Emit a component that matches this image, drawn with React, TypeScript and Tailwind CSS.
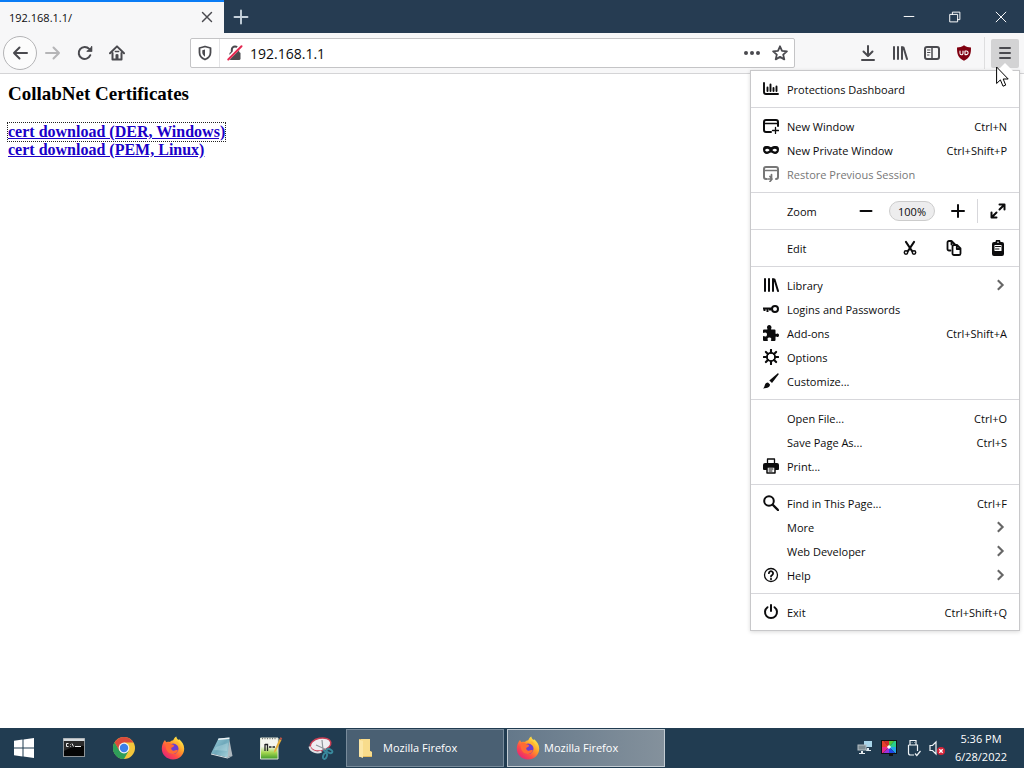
import React, { type ReactNode } from "react";

type IconProps = { children: ReactNode; className?: string; size?: number };

function Icon({ children, className = "", size = 16 }: IconProps) {
  return (
    <svg
      width={size}
      height={size}
      viewBox="0 0 16 16"
      fill="none"
      stroke="currentColor"
      strokeWidth="2"
      strokeLinecap="round"
      strokeLinejoin="round"
      aria-hidden="true"
      className={`shrink-0 ${className}`}
    >
      {children}
    </svg>
  );
}

const BackIcon = () => (
  <Icon><path d="M15 8H2M7.5 2.5 2 8l5.500 5.500" /></Icon>
);
const ForwardIcon = () => (
  <Icon><path d="M1 8h13M8.500 2.500 14 8l-5.500 5.500" /></Icon>
);
const ReloadIcon = () => (
  <Icon>
    <path d="M13.300 10.200A6 6 0 1 1 12.200 3.900" />
    <path d="M15 1v5.500H9.500z" fill="currentColor" stroke="none" />
    <path d="M14.700 1.600v4.600h-4.500" strokeWidth="1.200" />
  </Icon>
);
const HomeIcon = () => (
  <Icon>
    <path d="M1 8.300 8 1.400l7 6.900" />
    <path d="M3.500 8v6.500h9V8" />
    <path d="M6.500 14V9.500h3V14z" fill="currentColor" stroke="none" />
    <path d="M6.300 6.500h3.400" strokeWidth="1.300" />
    <path d="M8 10v4" />
  </Icon>
);
const ShieldIcon = () => (
  <Icon>
    <path d="M8 1.500 13.500 3v4.500c0 3.500-2.500 5.800-5.500 7-3-1.200-5.500-3.500-5.500-7V3z" strokeWidth="1.800" />
    <path d="M8 4.500v7.200C6.300 10.600 5.300 9.300 5.300 7.500V5.200z" fill="currentColor" stroke="none" />
  </Icon>
);
const InsecureIcon = () => (
  <Icon>
    <path d="M4.800 7V4.800a3.200 3.200 0 0 1 6.400 0V7" />
    <rect x="2.500" y="7" width="11" height="8" rx="1.500" fill="currentColor" stroke="none" />
    <path d="M.8 14 14 .8" stroke="#fff" strokeWidth="3.600" strokeLinecap="butt" />
    <path d="M1.300 14.500 14.500 1.300" stroke="#e22850" strokeWidth="2" />
  </Icon>
);
const DotsIcon = () => (
  <Icon>
    <g fill="currentColor" stroke="none">
      <circle cx="2" cy="8" r="2" /><circle cx="8" cy="8" r="2" /><circle cx="14" cy="8" r="2" />
    </g>
  </Icon>
);
const StarIcon = () => (
  <Icon><path d="m8 1.300 2 4.500 4.900.5-3.700 3.300 1.100 4.800L8 11.900l-4.300 2.500 1.100-4.800L1.100 6.300 6 5.800z" strokeWidth="1.800" /></Icon>
);
const DownloadIcon = () => (
  <Icon><path d="M8 1v9.500M3.500 6.500 8 11l4.500-4.500M2 15h12" /></Icon>
);
const LibraryIcon = () => (
  <Icon><path d="M2 2v12M6 2v12M10 2v12M11.500 2.500 15 14" strokeWidth="2" /></Icon>
);
const SidebarIcon = () => (
  <Icon>
    <rect x="1" y="2" width="14" height="12" rx="2" />
    <path d="M8 2v12" strokeWidth="1.500" />
    <path d="M3.500 5h2.500M3.500 7.500H6M3.500 10H5" strokeWidth="1" />
  </Icon>
);
const UblockIcon = () => (
  <Icon>
    <path d="M8 .3c2 1.500 4.500 2.200 7 2.200 0 6-.5 10-7 13.200C1.500 12.500 1 8.500 1 2.500 3.500 2.500 6 1.800 8 .3z" fill="#800010" stroke="none" />
    <path d="M4 6v2.300a1.500 1.500 0 0 0 3 0V6M9 6v3.600h1.300a1.800 1.800 0 0 0 0-3.600z" stroke="#fff" strokeWidth="1.100" />
  </Icon>
);
const HamburgerIcon = () => (
  <Icon><path d="M3 3h10M3 8h10M3 13h10" /></Icon>
);

const DashboardIcon = () => (
  <Icon><path d="M1 2v9a2 2 0 0 0 2 2h12M4.500 6.500v3.500M7.500 3.500V10M10.500 7v3M13.500 5.500V10" strokeWidth="1.900" /></Icon>
);
const NewWindowIcon = () => (
  <Icon>
    <path d="M8 14H3a2 2 0 0 1-2-2V4a2 2 0 0 1 2-2h10a2 2 0 0 1 2 2v4" />
    <path d="M1 5.500h14" strokeWidth="1.500" />
    <path d="M12.500 9.500v6M9.500 12.500h6" strokeWidth="1.300" />
  </Icon>
);
const MaskIcon = () => (
  <Icon>
    <path
      d="M8 5.300C6.500 4 4.800 3.800 3 3.900.8 4 0 5.200 0 7.400 0 10.200 1.700 12 3.900 12c1.800 0 2.800-1.500 4.100-1.500S10.300 12 12.100 12c2.200 0 3.900-1.800 3.900-4.600 0-2.200-.8-3.400-3-3.500-1.800-.1-3.500.1-5 1.400zM4.300 9.500C3 9.500 2.200 8.500 2 7.900c.7-.8 1.400-1.200 2.300-1.200 1.100 0 2 .8 2.300 1.400-.4.700-1.200 1.400-2.300 1.400zm7.400 0c-1.100 0-1.900-.7-2.300-1.400.3-.6 1.200-1.400 2.300-1.400.9 0 1.600.4 2.300 1.200-.2.600-1 1.600-2.300 1.600z"
      fill="currentColor" stroke="none"
    />
  </Icon>
);
const RestoreIcon = () => (
  <Icon>
    <path d="M3.500 13H3a2 2 0 0 1-2-2V3a2 2 0 0 1 2-2h10a2 2 0 0 1 2 2v8a2 2 0 0 1-2 2" />
    <path d="M1 4.500h14" strokeWidth="1.500" />
    <path d="M8.500 8.500V13H5M7 10.500 9 13l-2 2.500" strokeWidth="1.700" />
  </Icon>
);
const MinusIcon = () => (
  <Icon><path d="M2.500 8h11" /></Icon>
);
const PlusIcon = () => (
  <Icon><path d="M2 8h12M8 2v12" /></Icon>
);
const FullscreenIcon = () => (
  <Icon><path d="M9.500 6.500 14 2M9.500 1.500h5v5M6.500 9.500 2 14M1.500 9.500v5h5" /></Icon>
);
const CutIcon = () => (
  <Icon>
    <path d="m4 2 6 9M12 2l-6 9" strokeWidth="2.200" />
    <circle cx="4" cy="12.500" r="1.700" strokeWidth="1.500" />
    <circle cx="12" cy="12.500" r="1.700" strokeWidth="1.500" />
  </Icon>
);
const CopyIcon = () => (
  <Icon>
    <path d="M4.500 10.500H3a1.500 1.500 0 0 1-1.500-1.500V2.500A1.500 1.500 0 0 1 3 1h2.500L9 4.500M5.500 1.500v3" strokeWidth="1.800" />
    <path d="M6.500 6.500A1.500 1.500 0 0 1 8 5h3l3.500 3.500v5A1.500 1.500 0 0 1 13 15H8a1.500 1.500 0 0 1-1.500-1.500zM10.800 5.500V9h3.500" strokeWidth="1.800" />
  </Icon>
);
const PasteIcon = () => (
  <Icon>
    <path d="M4 2h1.500a2.500 2.500 0 0 1 5 0H12a2 2 0 0 1 2 2v10a2 2 0 0 1-2 2H4a2 2 0 0 1-2-2V4a2 2 0 0 1 2-2z" fill="currentColor" stroke="none" />
    <path d="M4.500 5h7v6h-7z" fill="#fff" stroke="none" />
    <path d="M5.500 6.500h5M5.500 9h3.500" strokeWidth="1" />
    <circle cx="8" cy="2.200" r=".8" fill="#fff" stroke="none" />
  </Icon>
);
const KeyIcon = () => (
  <Icon>
    <circle cx="12" cy="8" r="3" />
    <path d="M9 7.500H0M1.500 7.500V10M4.500 7.500V11M7 7.500v2" strokeLinecap="butt" />
  </Icon>
);
const PuzzleIcon = () => (
  <Icon>
    <path
      d="M14.500 8.500c-.8 0-1 .5-1.500.5-.4 0-.5-.3-.5-1V5.500a1 1 0 0 0-1-1H9c-.7 0-1-.2-1-.6 0-.4.500-.7.500-1.500C8.500 1 7.500 0 6.200 0S4 1 4 2.400c0 .8.5 1.100.5 1.500 0 .4-.3.600-1 .6H1a1 1 0 0 0-1 1V7c0 .6.200 1 .7 1 .4 0 .8-.6 1.600-.6C3.400 7.400 4 8.300 4 9.500s-.6 2.100-1.700 2.100c-.8 0-1.200-.6-1.600-.6-.5 0-.7.400-.7 1V15a1 1 0 0 0 1 1h3c.7 0 1-.2 1-.7 0-.4-.5-.7-.5-1.400 0-1 .8-1.500 1.900-1.500s1.900.5 1.900 1.500c0 .7-.5 1-.5 1.400 0 .5.300.7 1 .7h2.700a1 1 0 0 0 1-1v-2.500c0-.7.100-1 .5-1 .5 0 .7.500 1.500.5.900 0 1.500-.8 1.500-1.800 0-.9-.6-1.700-1.500-1.700z"
      fill="currentColor" stroke="none"
    />
  </Icon>
);
const GearIcon = () => (
  <Icon>
    <circle cx="8" cy="8" r="4.100" strokeWidth="1.900" />
    <path d="M8 .8v3M8 12.200v3M.8 8h3M12.200 8h3M2.900 2.900l2 2M11.100 11.100l2 2M2.900 13.100l2-2M11.100 4.900l2-2" strokeWidth="2.100" />
  </Icon>
);
const BrushIcon = () => (
  <Icon>
    <path d="M14.500.4c.5-.4 1.400.4 1 1L9 10 6.300 7.500z" fill="currentColor" stroke="none" />
    <path d="m5 9.500 2 2c.1 2.200-2 3.900-7 3.900 1.300-1 1.300-1.800 1.700-3 .4-1.800 1.600-2.900 3.300-2.900z" fill="currentColor" stroke="none" />
  </Icon>
);
const PrintIcon = () => (
  <Icon>
    <path d="M4.500 5V1h7V5" strokeWidth="1.300" />
    <path d="M2 5h12a2 2 0 0 1 2 2v4a1 1 0 0 1-1 1H1a1 1 0 0 1-1-1V7a2 2 0 0 1 2-2z" fill="currentColor" stroke="none" />
    <path d="M4 9h8v6H4z" fill="#fff" strokeWidth="1.500" />
    <path d="M6 11h4M6 13h3" strokeWidth="1" />
  </Icon>
);
const SearchIcon = () => (
  <Icon><circle cx="6" cy="6" r="4.800" /><path d="m10 10 5 5" strokeWidth="2.400" /></Icon>
);
const HelpIcon = () => (
  <Icon>
    <circle cx="8" cy="8" r="6.500" strokeWidth="1.300" />
    <path d="M5.900 6.200A2.100 2.100 0 1 1 9.200 8c-.8.500-1.200.8-1.200 1.500" strokeWidth="1.800" />
    <circle cx="8" cy="12" r="1.100" fill="currentColor" stroke="none" />
  </Icon>
);
const PowerIcon = () => (
  <Icon><path d="M8 1v6M4.500 3.200a6 6 0 1 0 7 0" /></Icon>
);
const ChevronIcon = () => (
  <Icon className="text-[#666]" size={14}><path d="m5.500 2.500 5.500 5.500-5.500 5.500" strokeWidth="2.400" strokeLinecap="butt" strokeLinejoin="miter" /></Icon>
);

function FirefoxLogo() {
  return (
    <svg width="24" height="24" viewBox="0 0 24 24" aria-hidden="true" className="shrink-0">
      <defs>
        <linearGradient id="flame" x1="0.85" y1="0.1" x2="0.2" y2="0.9">
          <stop offset="0" stopColor="#fff04a" />
          <stop offset="0.4" stopColor="#ff9a28" />
          <stop offset="0.72" stopColor="#ff4a48" />
          <stop offset="1" stopColor="#e62a72" />
        </linearGradient>
      </defs>
      <path
        d="M4 4c.3 1 .8 1.700 1.500 2.300C6.500 5.900 7.700 5.700 9 6c.8-1 2-1.600 3.200-1.700C13 2.300 14.300 1 15.300.5c.2 1.600 1 2.500 2.200 3.600.4-.1.500-.6.400-1 3 2.400 5.300 5.600 5.300 9.700C23.200 19 18.200 23.500 12 23.500S.8 18.800.8 12.800C.8 9.500 2 6 4 4z"
        fill="url(#flame)"
      />
      <circle cx="12.200" cy="12.700" r="5.300" fill="#6c3fd0" />
      <path d="M5.500 6.800c2-1 4 .2 5.300 1.700 1 .1 2.100.4 2.400 1.200-.6 1.400-2 1.400-2.800 2-.6 1 .2 2.600 1.800 3 1.800.2 2.600-.7 4-.6 1 .2.700 1.300 0 2-1.600 1.900-5 2.600-8 .8C4.700 14.800 4 10 5.500 6.800z" fill="#ff6a35" />
      <path d="M15.500 5c2.600 2 4.500 5.300 3.500 8.500-.1-2.600-1.600-4.700-4-5.600z" fill="#ffb52e" />
    </svg>
  );
}

function ChromeLogo() {
  return (
    <svg width="24" height="24" viewBox="0 0 24 24" aria-hidden="true">
      <circle cx="12" cy="12" r="11" fill="#f4c63b" />
      <path d="M12 12 2.500 6.500A11 11 0 0 1 21.500 6.500H12z" fill="#dc4b3c" />
      <path d="M2.500 6.500A11 11 0 0 0 12 23l4.700-8.200L7.300 14.800z" fill="#2f9e59" />
      <path d="M2.500 6.500 7.300 14.800 12 7V6.500z" fill="#dc4b3c" />
      <path d="M2.500 6.500 7.300 14.700 12 17l-1 6A11 11 0 0 1 2.500 6.500z" fill="#2f9e59" />
      <circle cx="12" cy="12" r="5.400" fill="#f3f3f3" />
      <circle cx="12" cy="12" r="4.200" fill="#3d80ea" />
    </svg>
  );
}

function WindowsLogo() {
  return (
    <svg width="20" height="20" viewBox="0 0 20 20" fill="#fff" aria-hidden="true">
      <path d="M0 2.700 8.500 1.600v8H0zM9.500 1.400 20 0v9.600H9.500zM0 10.500h8.500v8L0 17.300zM9.500 10.500H20V20L9.500 18.600z" />
    </svg>
  );
}

function CommandPromptLogo() {
  return (
    <svg width="24" height="24" viewBox="0 0 24 24" aria-hidden="true">
      <rect x="1" y="2" width="22" height="19" fill="#8e9498" />
      <rect x="1.500" y="2.500" width="21" height="2.500" fill="#d5dadd" />
      <rect x="2" y="5" width="20" height="15" fill="#050505" />
      <path d="M2 5h20v5C14 10 7 12 2 15z" fill="#2a2a2a" />
      <path d="M6.500 7.500h-2v3h2M8.500 8v.6M8.500 10v.6M10 7.500l1.500 3M13 10.500h6" stroke="#eee" fill="none" />
    </svg>
  );
}

function NotepadLogo() {
  return (
    <svg width="24" height="24" viewBox="0 0 24 24" aria-hidden="true">
      <defs>
        <linearGradient id="pad" x1="0" y1="0" x2="1" y2="1">
          <stop offset="0" stopColor="#9fd0dc" />
          <stop offset="0.500" stopColor="#6fa9bb" />
          <stop offset="1" stopColor="#a9d4dd" />
        </linearGradient>
      </defs>
      <path d="m19 2 3.500 18-6 1.500z" fill="#aeb9bf" />
      <path d="M8.500 2.500 19.500 1.500 17.500 21.500 1 17.500z" fill="url(#pad)" />
      <path d="m1 17.500 16.500 4 5-1.500-5 2.500L1 18.500z" fill="#dfe6e9" />
      <path d="m8.500 2.500 11-1-.2 1.500-11.300 1z" fill="#eef3f5" />
      <path d="m6 11 12-4-.8 8L4 14z" fill="#c7e5ea" opacity=".35" />
    </svg>
  );
}

function EditorLogo() {
  return (
    <svg width="24" height="24" viewBox="0 0 24 24" aria-hidden="true">
      <defs>
        <linearGradient id="page" x1="0" y1="0" x2="0" y2="1">
          <stop offset="0.400" stopColor="#f4f6ee" />
          <stop offset="0.700" stopColor="#a4d64e" />
          <stop offset="1" stopColor="#3f9a2c" />
        </linearGradient>
      </defs>
      <path d="M1.500 2h17.500v21H1.500z" fill="url(#page)" stroke="#dfe6d8" />
      <path d="M3 2.500h15" stroke="#777" strokeWidth="1.500" strokeDasharray="1 1.500" />
      <path d="M6 8v7M6 8.500h2.500V15" stroke="#222" fill="none" strokeWidth="1.300" />
      <path d="M10 11h2.500M13.500 11H16" stroke="#222" strokeWidth="1.400" />
      <path d="m20.500 3-5 11-.7 3 2.200-2L22.500 4z" fill="#e5ad38" />
      <path d="m20.500 3 .7-1.800 2 .8-.7 2z" fill="#bc5448" />
    </svg>
  );
}

function SnipLogo() {
  return (
    <svg width="26" height="24" viewBox="0 0 26 24" aria-hidden="true">
      <ellipse cx="12.500" cy="8.500" rx="10.500" ry="6.300" transform="rotate(-12 12.500 8.500)" fill="#eeeef0" stroke="#cb3f54" strokeWidth="1.500" />
      <path d="M1.500 10.500c1 5.500 8 7 12 5" stroke="#dedfe3" strokeWidth="2" fill="none" />
      <path d="m14 4 1 10M8 9l10 4.500" stroke="#8f969b" strokeWidth="1.200" />
      <g fill="none" stroke="#39899c" strokeWidth="1.900">
        <ellipse cx="21.500" cy="15" rx="3" ry="1.800" transform="rotate(25 21.500 15)" />
        <ellipse cx="17" cy="20" rx="1.800" ry="3" transform="rotate(20 17 20)" />
      </g>
      <path d="m15 14 4 2.500" stroke="#39899c" strokeWidth="2" />
    </svg>
  );
}

function FolderLogo() {
  return (
    <svg width="24" height="24" viewBox="0 0 24 24" aria-hidden="true" className="shrink-0">
      <path d="M6 3h11v12l2 1v5H6z" fill="#e7bd5d" />
      <path d="M8 3h9v12l2 1v4H9z" fill="#f8dc8c" />
      <path d="M6 3.500 10 5v17l-4-1.500z" fill="#fbe6a6" />
    </svg>
  );
}

function MenuRow({ icon, label, shortcut, submenu, disabled }: {
  icon?: ReactNode; label: string; shortcut?: string; submenu?: boolean; disabled?: boolean;
}) {
  return (
    <button
      type="button"
      role="menuitem"
      disabled={disabled}
      className="flex h-6 w-full items-center gap-2 px-3 text-left hover:bg-gray-100 disabled:text-[#777]"
    >
      <span className="flex w-4 shrink-0">{icon}</span>
      <span className="flex-1 pt-0.5">{label}</span>
      {shortcut && <span className="pt-0.5">{shortcut}</span>}
      {submenu && <ChevronIcon />}
    </button>
  );
}

function MenuSection({ children }: { children: ReactNode }) {
  return <div className="border-b border-[#d7d7db] py-1.5 last:border-b-0">{children}</div>;
}

function IconButton({ label, children, className = "" }: { label: string; children: ReactNode; className?: string }) {
  return (
    <button type="button" aria-label={label} className={`flex shrink-0 items-center justify-center ${className}`}>
      {children}
    </button>
  );
}

function AppMenu() {
  return (
    <div
      role="menu"
      className="absolute top-[70px] right-1 z-10 w-[270px] border border-[#c8c8ca] bg-white text-[11px] text-[#0c0c0d] shadow-[0_1px_4px_rgba(0,0,0,0.15)]"
    >
      <MenuSection><MenuRow icon={<DashboardIcon />} label="Protections Dashboard" /></MenuSection>
      <MenuSection>
        <MenuRow icon={<NewWindowIcon />} label="New Window" shortcut="Ctrl+N" />
        <MenuRow icon={<MaskIcon />} label="New Private Window" shortcut="Ctrl+Shift+P" />
        <MenuRow icon={<RestoreIcon />} label="Restore Previous Session" disabled />
      </MenuSection>
      <MenuSection>
        <div className="flex h-6 items-center pr-3 pl-9">
          <span className="flex-1 pt-0.5">Zoom</span>
          <IconButton label="Zoom out" className="mr-[11px] size-6"><MinusIcon /></IconButton>
          <button type="button" className="h-5 w-[46px] rounded-full border border-[#ccc] bg-[#ededee] leading-none">100%</button>
          <IconButton label="Zoom in" className="mr-[7px] ml-[11px] size-6"><PlusIcon /></IconButton>
          <span className="h-6 w-px bg-[#d7d7db]" />
          <IconButton label="Full screen" className="ml-[11px] h-6 w-[18px]"><FullscreenIcon /></IconButton>
        </div>
      </MenuSection>
      <MenuSection>
        <div className="flex h-6 items-center pr-[9px] pl-9">
          <span className="flex-1 pt-0.5">Edit</span>
          <div className="flex gap-5">
            <IconButton label="Cut" className="size-6"><CutIcon /></IconButton>
            <IconButton label="Copy" className="size-6"><CopyIcon /></IconButton>
            <IconButton label="Paste" className="size-6"><PasteIcon /></IconButton>
          </div>
        </div>
      </MenuSection>
      <MenuSection>
        <MenuRow icon={<LibraryIcon />} label="Library" submenu />
        <MenuRow icon={<KeyIcon />} label="Logins and Passwords" />
        <MenuRow icon={<PuzzleIcon />} label="Add-ons" shortcut="Ctrl+Shift+A" />
        <MenuRow icon={<GearIcon />} label="Options" />
        <MenuRow icon={<BrushIcon />} label="Customize..." />
      </MenuSection>
      <MenuSection>
        <MenuRow label="Open File..." shortcut="Ctrl+O" />
        <MenuRow label="Save Page As..." shortcut="Ctrl+S" />
        <MenuRow icon={<PrintIcon />} label="Print..." />
      </MenuSection>
      <MenuSection>
        <MenuRow icon={<SearchIcon />} label="Find in This Page..." shortcut="Ctrl+F" />
        <MenuRow label="More" submenu />
        <MenuRow label="Web Developer" submenu />
        <MenuRow icon={<HelpIcon />} label="Help" submenu />
      </MenuSection>
      <MenuSection><MenuRow icon={<PowerIcon />} label="Exit" shortcut="Ctrl+Shift+Q" /></MenuSection>
    </div>
  );
}

function TabStrip() {
  return (
    <div className="flex h-[33px] bg-[#263c52]">
      <div className="flex w-56 items-center justify-between border-t-2 border-[#0a7cf5] bg-[#f7f7f8] pr-2 pb-px pl-[9px] text-[11px] text-[#0c0c0d]">
        <span className="pt-0.5">192.168.1.1/</span>
        <IconButton label="Close tab" className="size-[18px] text-[#4a4a4f]">
          <Icon size={12}><path d="m2 2 12 12M14 2 2 14" strokeWidth="1.900" /></Icon>
        </IconButton>
      </div>
      <IconButton label="New tab" className="w-[34px] text-[#c6d2dc]">
        <Icon><path d="M1.500 8h13M8 1.500v13" strokeWidth="1.900" /></Icon>
      </IconButton>
      <div className="ml-auto flex text-white">
        <IconButton label="Minimize" className="w-[46px]">
          <Icon size={12}><path d="M1.500 7.300h13" strokeWidth="1.300" /></Icon>
        </IconButton>
        <IconButton label="Restore" className="w-[46px]">
          <Icon size={12}>
            <path d="M1.500 4.500h10v10h-10zM4.500 4.500v-3h10v10h-3" strokeWidth="1.300" strokeLinejoin="miter" />
          </Icon>
        </IconButton>
        <IconButton label="Close window" className="w-[46px]">
          <Icon size={12}><path d="m1.500 1.500 13 13M14.500 1.500l-13 13" strokeWidth="1.300" /></Icon>
        </IconButton>
      </div>
    </div>
  );
}

function Toolbar() {
  return (
    <div className="flex h-[41px] items-center border-b border-[#d4d4d6] bg-[#f7f7f8] pr-[5px] pl-[3px] text-[#4a4a4f]">
      <IconButton label="Back" className="size-[34px] rounded-full border border-[#b4b4b6] bg-[#fcfcfc]"><BackIcon /></IconButton>
      <IconButton label="Forward" className="size-8 text-[#b5b5b7]"><ForwardIcon /></IconButton>
      <IconButton label="Reload" className="size-8"><ReloadIcon /></IconButton>
      <IconButton label="Home" className="size-8"><HomeIcon /></IconButton>
      <div className="mx-[57px] flex h-[30px] flex-1 items-center rounded-xs border border-[#c4c4c6] bg-white">
        <IconButton label="Tracking protection" className="h-7 w-7"><ShieldIcon /></IconButton>
        <span className="h-7 w-px bg-[#e4e4e6]" />
        <IconButton label="Connection is not secure" className="h-7 w-[30px]"><InsecureIcon /></IconButton>
        <input
          type="text"
          aria-label="Address"
          defaultValue="192.168.1.1"
          className="min-w-0 flex-1 bg-transparent pt-px text-[14px] leading-5 text-[#0c0c0d] outline-none"
        />
        <IconButton label="Page actions" className="size-7"><DotsIcon /></IconButton>
        <IconButton label="Bookmark this page" className="size-7"><StarIcon /></IconButton>
      </div>
      <IconButton label="Downloads" className="size-8"><DownloadIcon /></IconButton>
      <IconButton label="Library" className="size-8"><LibraryIcon /></IconButton>
      <IconButton label="Sidebars" className="size-8"><SidebarIcon /></IconButton>
      <IconButton label="uBlock Origin" className="size-8"><UblockIcon /></IconButton>
      <span className="mr-1.5 ml-1 h-8 w-px bg-[#dededf]" />
      <IconButton label="Open menu" className="h-[29px] w-7 rounded-xs bg-[#d3d3d4]"><HamburgerIcon /></IconButton>
    </div>
  );
}

function Taskbar() {
  return (
    <footer className="flex h-10 items-center bg-[#213c51] text-[11px] text-white">
      <IconButton label="Start" className="h-10 w-12"><WindowsLogo /></IconButton>
      <IconButton label="Command Prompt" className="h-10 w-[52px]"><CommandPromptLogo /></IconButton>
      <IconButton label="Chrome" className="h-10 w-12"><ChromeLogo /></IconButton>
      <IconButton label="Firefox" className="h-10 w-[49px]"><FirefoxLogo /></IconButton>
      <IconButton label="Notepad" className="h-10 w-[49px]"><NotepadLogo /></IconButton>
      <IconButton label="Notepad++" className="h-10 w-[49px]"><EditorLogo /></IconButton>
      <IconButton label="Snipping Tool" className="h-10 w-[51px]"><SnipLogo /></IconButton>
      <div className="flex gap-[3px]">
        <button type="button" className="flex h-[38px] w-[158px] items-center gap-1.5 border border-[#788b9b] bg-[#4a6073] pl-1.5">
          <FolderLogo />
          <span>Mozilla Firefox</span>
        </button>
        <button type="button" className="flex h-[38px] w-[158px] items-center gap-1 border border-[#c3ccd3] bg-linear-to-r from-[#64788a] to-[#84919c] pl-2">
          <FirefoxLogo />
          <span>Mozilla Firefox</span>
        </button>
      </div>
      <div className="ml-auto flex items-center gap-2">
        <svg width="16" height="16" viewBox="0 0 16 16" aria-label="Network">
          <rect x="7" y="1" width="8" height="6" fill="#a9d5ea" />
          <path d="M10 8h2v2h2v1H9z" fill="#dfe9ee" />
          <rect x="1" y="5" width="8" height="5" fill="#7d8b92" stroke="#b3bdc3" />
          <path d="M4 11h2v2h2v1H2v-1h2z" fill="#e8edf0" />
        </svg>
        <svg width="16" height="16" viewBox="0 0 16 16" aria-label="Display colors">
          <defs>
            <clipPath id="screen"><path d="M1 1h14v12H1z" /></clipPath>
          </defs>
          <path d="M0 0h16v14h-4v2H8v-2H0z" fill="#111" />
          <g clipPath="url(#screen)">
            <path d="M8 7 0-2h8z" fill="#d22c2c" /><path d="M8 7V-2h8z" fill="#53c936" />
            <path d="m8 7 8-9v9z" fill="#2bcf8c" /><path d="M8 7h8v8z" fill="#24a4e8" />
            <path d="m8 7 8 8H8z" fill="#2347e6" /><path d="M8 7v8H0z" fill="#9931de" />
            <path d="m8 7-8 8V7z" fill="#e92b86" /><path d="M8 7H0v-9z" fill="#e8402c" />
            <circle cx="8" cy="7" r="1.800" fill="#fff" />
          </g>
        </svg>
        <svg width="16" height="18" viewBox="0 0 16 18" fill="none" stroke="#eef3f6" strokeWidth="1.200" aria-label="USB device">
          <path d="M5 6V1.500h6V6M3.500 6h9v6M3.500 6v8a2 2 0 0 0 2 2H9M6.800 3.500h.5M9 3.500h.5M10 14.500l1.800 2 3.700-4.500" />
        </svg>
        <svg width="16" height="16" viewBox="0 0 16 16" aria-label="Volume muted">
          <path d="M1 5.500h2.500L7 2v12l-3.500-3.500H1z" fill="none" stroke="#eef3f6" strokeWidth="1.200" />
          <circle cx="12" cy="11" r="4" fill="#d5253a" />
          <path d="m10.300 9.300 3.400 3.400M13.700 9.300l-3.400 3.400" stroke="#fff" strokeWidth="1.300" />
        </svg>
      </div>
      <div className="w-[79px] pr-[7px] text-center leading-[18px]">
        <div className="whitespace-nowrap">5:36 PM</div>
        <div className="whitespace-nowrap">6/28/2022</div>
      </div>
    </footer>
  );
}

export default function App() {
  return (
    <div className="flex min-h-screen flex-col bg-white font-['Open_Sans','Noto_Sans',sans-serif]">
      <header className="relative">
        <TabStrip />
        <Toolbar />
        <AppMenu />
        <svg width="16" height="8" viewBox="0 0 16 8" className="absolute top-[63px] right-[11px] z-10" aria-hidden="true">
          <path d="M0 8 8 0l8 8z" fill="#fff" />
        </svg>
        <svg width="13" height="22" viewBox="0 0 13 22" className="absolute top-[66px] right-[15px] z-20" aria-hidden="true">
          <path d="M.6 1v16.500l3.800-3.600 2.600 6.300 2.700-1.100L7.200 13h5z" fill="#fff" stroke="#000" />
        </svg>
      </header>
      <main className="flex-1 px-2 pt-2 font-['Liberation_Serif',serif] font-bold text-black">
        <h3 className="text-[19px] leading-6">CollabNet Certificates</h3>
        <div className="mt-[17px] flex flex-col items-start text-[16px] leading-[18px] text-[#1a00c8]">
          <a href="#der" className="underline outline-1 outline-dotted outline-[#222]">cert download (DER, Windows)</a>
          <a href="#pem" className="underline">cert download (PEM, Linux)</a>
        </div>
      </main>
      <Taskbar />
    </div>
  );
}
